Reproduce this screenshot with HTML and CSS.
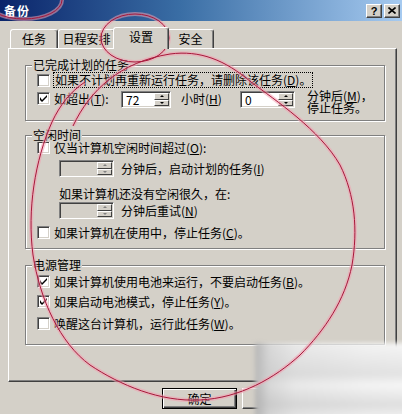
FILE: index.html
```html
<!DOCTYPE html>
<html>
	<head>
		<meta charset="utf-8">
		<title>备份</title>
		<link rel="stylesheet" href="styles.css">
	</head>
	<body>
		<div class="window">
			<div class="titlebar">
				<span class="title">备份</span>
				<span class="cbtn help">?</span>
				<span class="cbtn close">
					<svg width="8" height="7" viewBox="0 0 8 7"><path d="M0.5 0.5 L7.5 6.5 M7.5 0.5 L0.5 6.5" stroke="#000" stroke-width="1.6"/></svg>
				</span>
			</div>
			<div class="client">
				<div class="tabs">
					<div class="tab w-task">任务</div>
					<div class="tab w-plan">日程安排</div>
					<div class="tab tab-on">设置</div>
					<div class="tab w-safe">安全</div>
				</div>
				<div class="panel">
					<!-- 已完成计划的任务 -->
					<div class="group g-done">
						<span class="group-title">已完成计划的任务</span>
						<div class="check-row r-del">
							<span class="box"></span>
							<span class="focus">如果不计划再重新运行任务，请删除该任务(<u>D</u>)。</span>
						</div>
						<div class="check-row r-exceed">
							<span class="box on"><svg width="7" height="7" viewBox="0 0 7 7"><path d="M0 2 L0 5 L2 7 L7 2 L7 0 L2 5 Z"/></svg></span>
							<span class="lbl-exceed">如超出(<u>T</u>):</span>
							<span class="spin w50"><span class="spin-val">72</span><span class="spin-btns"><i class="up"></i><i class="down"></i></span></span>
							<span class="lbl-hour">小时(<u>H</u>)</span>
							<span class="spin w55"><span class="spin-val">0</span><span class="spin-btns"><i class="up"></i><i class="down"></i></span></span>
							<span class="lbl-min">分钟后(<u>M</u>)，<br>停止任务。</span>
						</div>
					</div>
					<!-- 空闲时间 -->
					<div class="group g-idle">
						<span class="group-title">空闲时间</span>
						<div class="check-row r-idle1">
							<span class="box"></span>
							<span>仅当计算机空闲时间超过(<u>O</u>):</span>
						</div>
						<div class="sub-row r-spin1">
							<span class="spin w55 off"><span class="spin-val"></span><span class="spin-btns"><i class="up"></i><i class="down"></i></span></span>
							<span class="spin-text">分钟后，启动计划的任务(<u>I</u>)</span>
						</div>
						<div class="sub-row r-note">如果计算机还没有空闲很久，在:</div>
						<div class="sub-row r-spin2">
							<span class="spin w55 off"><span class="spin-val"></span><span class="spin-btns"><i class="up"></i><i class="down"></i></span></span>
							<span class="spin-text">分钟后重试(<u>N</u>)</span>
						</div>
						<div class="check-row r-idle2">
							<span class="box"></span>
							<span>如果计算机在使用中，停止任务(<u>C</u>)。</span>
						</div>
					</div>
					<!-- 电源管理 -->
					<div class="group g-power">
						<span class="group-title">电源管理</span>
						<div class="check-row r-pw1">
							<span class="box on"><svg width="7" height="7" viewBox="0 0 7 7"><path d="M0 2 L0 5 L2 7 L7 2 L7 0 L2 5 Z"/></svg></span>
							<span>如果计算机使用电池来运行，不要启动任务(<u>B</u>)。</span>
						</div>
						<div class="check-row r-pw2">
							<span class="box on"><svg width="7" height="7" viewBox="0 0 7 7"><path d="M0 2 L0 5 L2 7 L7 2 L7 0 L2 5 Z"/></svg></span>
							<span>如果启动电池模式，停止任务(<u>Y</u>)。</span>
						</div>
						<div class="check-row r-pw3">
							<span class="box"></span>
							<span>唤醒这台计算机，运行此任务(<u>W</u>)。</span>
						</div>
					</div>
				</div>
				<div class="buttons">
					<span class="btn btn-default">确定</span>
					<span class="btn">取消</span>
					<span class="btn">应用(<u>A</u>)</span>
				</div>
			</div>
			<!-- 右下角的模糊水印 -->
			<div class="haze"></div>
			<!-- 红色圈注 -->
			<svg class="marks" width="402" height="414" viewBox="0 0 402 414">
				<defs>
					<ellipse id="m-title" cx="24" cy="0" rx="38" ry="19"/>
					<ellipse id="m-tab" cx="135" cy="38" rx="34" ry="24"/>
					<path id="m-big" d="M73 126 C90 90 120 62 170 54 C200 50 225 60 251 82 C275 100 320 130 340 165 C355 195 358 230 352 265 C345 300 325 330 300 355 C275 378 240 398 200 400 C160 402 120 385 90 365 C60 343 40 300 33 255 C27 210 35 160 52 122 C60 105 70 92 85 82"/>
				</defs>
				<g class="mark-glow">
					<use href="#m-title"/><use href="#m-tab"/><use href="#m-big"/>
				</g>
				<g class="mark-line">
					<use href="#m-title"/><use href="#m-tab"/><use href="#m-big"/>
				</g>
			</svg>
		</div>
	</body>
</html>
```
FILE: styles.css
```css
* {
	box-sizing: border-box;
}
body {
	margin: 0;
	font: 12px "Noto Sans CJK SC", "Liberation Sans", sans-serif;
	color: #000;
}
u {
	text-decoration: underline;
	text-underline-offset: 1px;
}
.window {
	position: relative;
	width: 402px;
	height: 414px;
	overflow: hidden;
	background-color: #d4d0c8;
}
.titlebar {
	height: 21px;
	display: flex;
	align-items: center;
	padding: 0 2px 0 4px;
	background: linear-gradient(to right, #0a246a, #3a6ea5 45%, #a6caf0);
}
.title {
	flex: 1;
	color: #fff;
	font-weight: bold;
	letter-spacing: 1px;
}
.cbtn {
	width: 16px;
	height: 14px;
	display: flex;
	align-items: center;
	justify-content: center;
	background-color: #d4d0c8;
	border: 1px solid;
	border-color: #fff #404040 #404040 #fff;
	box-shadow: inset -1px -1px #808080;
	font: bold 11px "Liberation Sans", sans-serif;
	line-height: 12px;
}
.help {
	margin-right: 2px;
}
.client {
	padding: 6px 5px 0 8px;
}

/* 选项卡 */
.tabs {
	height: 21px;
	display: flex;
	align-items: flex-end;
	padding-left: 2px;
}
.tab {
	height: 19px;
	line-height: 17px;
	text-align: center;
	background-color: #d4d0c8;
	border: 1px solid;
	border-bottom: none;
	border-color: #fff #404040 transparent #fff;
	border-radius: 3px 3px 0 0;
	box-shadow: inset -1px 0 #808080;
}
.w-task {
	width: 48px;
}
.w-plan {
	width: 57px;
}
.w-safe {
	width: 47px;
}
.tab-on {
	position: relative;
	z-index: 1;
	width: 56px;
	height: 22px;
	margin: 0 -2px -1px;
	line-height: 18px;
}
.panel {
	height: 334px;
	padding: 0 11px 0 16px;
	border: 1px solid;
	border-color: #fff #404040 #404040 #fff;
	box-shadow: inset -1px -1px #808080;
}

/* 分组框 */
.group {
	position: relative;
	border: 1px solid #808080;
	box-shadow: inset 1px 1px #fff, 1px 1px #fff;
}
.group-title {
	position: absolute;
	top: -8px;
	left: 6px;
	padding: 0 1px;
	line-height: 14px;
	background-color: #d4d0c8;
}
.g-done {
	margin-top: 16px;
	height: 56px;
}
.g-idle {
	margin-top: 14px;
	height: 114px;
}
.g-power {
	margin-top: 16px;
	height: 80px;
}
.check-row {
	display: flex;
	align-items: center;
	height: 16px;
	padding-left: 11px;
}
.check-row > .box + span {
	margin-left: 4px;
}
.box {
	width: 13px;
	height: 13px;
	flex: none;
	display: flex;
	align-items: center;
	justify-content: center;
	background-color: #fff;
	border: 1px solid;
	border-color: #808080 #fff #fff #808080;
	box-shadow: inset 1px 1px #404040, inset -1px -1px #d4d0c8;
}
.focus {
	outline: 1px dotted #000;
	padding: 0 1px;
	line-height: 14px;
}
.r-del {
	margin-top: 6px;
}
.r-exceed {
	height: 24px;
	margin-top: 2px;
	align-items: flex-start;
}
.r-exceed .box {
	margin-top: 2px;
}
.lbl-exceed,
.lbl-hour {
	line-height: 18px;
}
.check-row .lbl-exceed {
	width: 67px;
}
.lbl-hour {
	width: 59px;
	margin-left: 10px;
}
.lbl-min {
	margin-left: 12px;
	line-height: 12px;
}
.r-exceed .spin {
	margin-top: 1px;
}

/* 数值框 */
.spin {
	height: 17px;
	display: flex;
	flex: none;
	background-color: #fff;
	border: 1px solid;
	border-color: #808080 #fff #fff #808080;
	box-shadow: inset 1px 1px #404040, inset -1px -1px #d4d0c8;
	padding: 1px;
}
.spin.off {
	background-color: #d4d0c8;
}
.w50 {
	width: 50px;
}
.w55 {
	width: 55px;
}
.spin-val {
	flex: 1;
	padding-left: 3px;
	line-height: 13px;
}
.spin-btns {
	width: 15px;
	display: flex;
	flex-direction: column;
}
.spin-btns i {
	flex: 1;
	display: flex;
	align-items: center;
	justify-content: center;
	background-color: #d4d0c8;
	border: 1px solid;
	border-color: #fff #404040 #404040 #fff;
}
.spin-btns i::after {
	content: "";
	width: 0;
	height: 0;
	border-left: 2px solid transparent;
	border-right: 2px solid transparent;
}
.up::after {
	border-bottom: 2px solid #000;
}
.down::after {
	border-top: 2px solid #000;
}
.off .spin-btns i::after {
	border-top-color: #808080;
	border-bottom-color: #808080;
}
.sub-row {
	display: flex;
	align-items: center;
	padding-left: 33px;
}
.spin-text {
	margin-left: 7px;
}
.r-idle1 {
	margin-top: 3px;
}
.r-spin1 {
	margin-top: 5px;
}
.r-note {
	margin-top: 9px;
	height: 14px;
}
.r-spin2 {
	margin-top: 2px;
}
.r-idle2 {
	margin-top: 5px;
}
.r-pw1 {
	margin-top: 7px;
}
.r-pw2 {
	margin-top: 4px;
}
.r-pw3 {
	margin-top: 6px;
}

/* 底部按钮 */
.buttons {
	display: flex;
	justify-content: flex-end;
	gap: 5px;
	margin-top: 6px;
}
.btn {
	width: 75px;
	height: 21px;
	line-height: 19px;
	text-align: center;
	border: 1px solid;
	border-color: #fff #404040 #404040 #fff;
	box-shadow: inset -1px -1px #808080;
}
.btn-default {
	border-color: #000;
	box-shadow: inset 1px 1px #fff, inset -1px -1px #404040, inset -2px -2px #808080;
}
.haze {
	position: absolute;
	left: 255px;
	top: 343px;
	right: -6px;
	bottom: -6px;
	background:
		linear-gradient(to bottom, rgba(255,255,255,0) 0, rgba(190,190,190,.35) 40%, rgba(255,255,255,0) 55%, rgba(170,170,170,.3) 80%, rgba(255,255,255,0) 100%),
		linear-gradient(to right, #b4b4b4 0, #d8d8d8 14px, #e9e9e9 40px, #f3f3f3 110px, #f6f6f6 100%);
	filter: blur(2px);
}
.marks {
	position: absolute;
	left: 0;
	top: 0;
	pointer-events: none;
}
.mark-glow {
	fill: none;
	stroke: #f2a2b2;
	stroke-width: 4;
	opacity: .55;
}
.mark-line {
	fill: none;
	stroke: #a8163a;
	stroke-width: 1;
}
```
